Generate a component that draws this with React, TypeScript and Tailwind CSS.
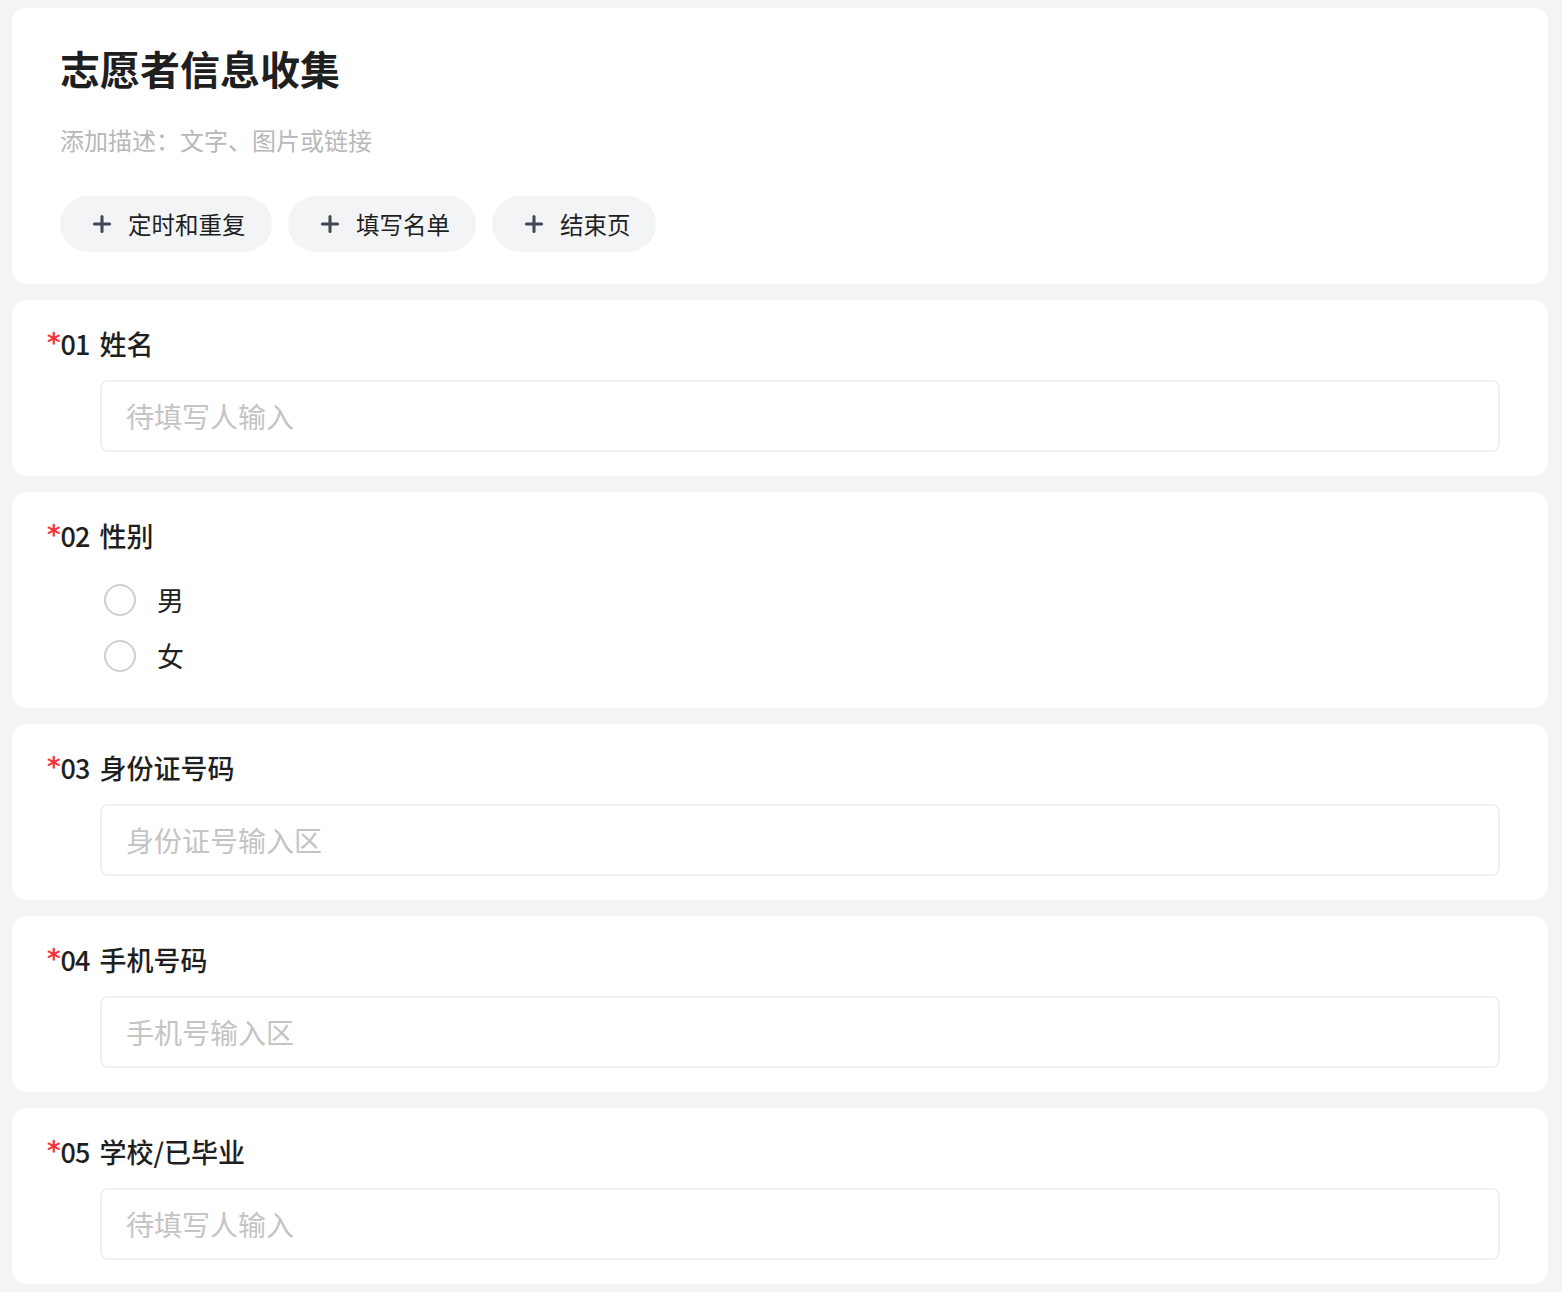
import { Plus } from 'lucide-react';

const FONT = { fontFamily: '"Noto Sans CJK SC", "Noto Sans", sans-serif' };

const ACTIONS = [
  { label: '定时和重复', w: 'w-[212px]' },
  { label: '填写名单', w: 'w-[188px]' },
  { label: '结束页', w: 'w-[164px]' },
];

function Label({ no, text }: { no: string; text: string }) {
  return (
    <div className="flex h-[36px] items-center text-[27px] font-medium leading-[36px] text-[#1f1f1f]">
      <span
        className="self-start pt-[4px] text-[26px] font-bold leading-[26px] text-[#f5333f]"
        style={{ fontFamily: '"DejaVu Sans", sans-serif' }}
      >
        *
      </span>
      <span className="tracking-[-1px]">{no}</span>
      <span className="ml-[10px]">{text}</span>
    </div>
  );
}

function InputQuestion({ no, text, placeholder }: { no: string; text: string; placeholder: string }) {
  return (
    <div className="rounded-[14px] bg-white pb-[24px] pl-[35px] pr-[48px] pt-[26px]">
      <Label no={no} text={text} />
      <div className="ml-[53px] mt-[18px] flex h-[72px] items-center rounded-[8px] border-2 border-[#f0f0f0] pl-[24px] text-[28px] text-[#c4c4c4]">
        {placeholder}
      </div>
    </div>
  );
}

export default function App() {
  return (
    <div className="min-h-[1292px] bg-[#f3f4f6] pb-[8px] pl-[12px] pr-[14px] pt-[8px]" style={FONT}>
      <div className="flex flex-col gap-[16px]">
        {/* Header */}
        <div className="rounded-[14px] bg-white pb-[32px] pl-[48px] pt-[38px]">
          <h1 className="text-[40px] font-bold leading-[44px] text-[#1f1f1f]">志愿者信息收集</h1>
          <p className="mt-[35px] text-[24px] leading-[30px] text-[#b8b8b8]">添加描述：文字、图片或链接</p>
          <div className="mt-[41px] flex gap-[16px]">
            {ACTIONS.map((a) => (
              <button
                key={a.label}
                className={`flex h-[56px] ${a.w} items-center gap-[13px] rounded-full bg-[#f3f4f6] pl-[29px] text-[23.5px] leading-[28px] text-[#1f1f1f]`}
              >
                <Plus className="h-[26px] w-[26px] text-[#3f4754]" strokeWidth={2.8} />
                {a.label}
              </button>
            ))}
          </div>
        </div>

        <InputQuestion no="01" text="姓名" placeholder="待填写人输入" />

        {/* Gender */}
        <div className="rounded-[14px] bg-white pb-[24px] pl-[35px] pr-[48px] pt-[26px]">
          <Label no="02" text="性别" />
          <div className="ml-[57px] mt-[18px]">
            {['男', '女'].map((o) => (
              <div key={o} className="flex h-[56px] items-center gap-[21px]">
                <span className="h-[32px] w-[32px] rounded-full border-2 border-[#cfcfcf]" />
                <span className="text-[27px] text-[#1f1f1f]">{o}</span>
              </div>
            ))}
          </div>
        </div>

        <InputQuestion no="03" text="身份证号码" placeholder="身份证号输入区" />
        <InputQuestion no="04" text="手机号码" placeholder="手机号输入区" />
        <InputQuestion no="05" text="学校/已毕业" placeholder="待填写人输入" />
      </div>
    </div>
  );
}
